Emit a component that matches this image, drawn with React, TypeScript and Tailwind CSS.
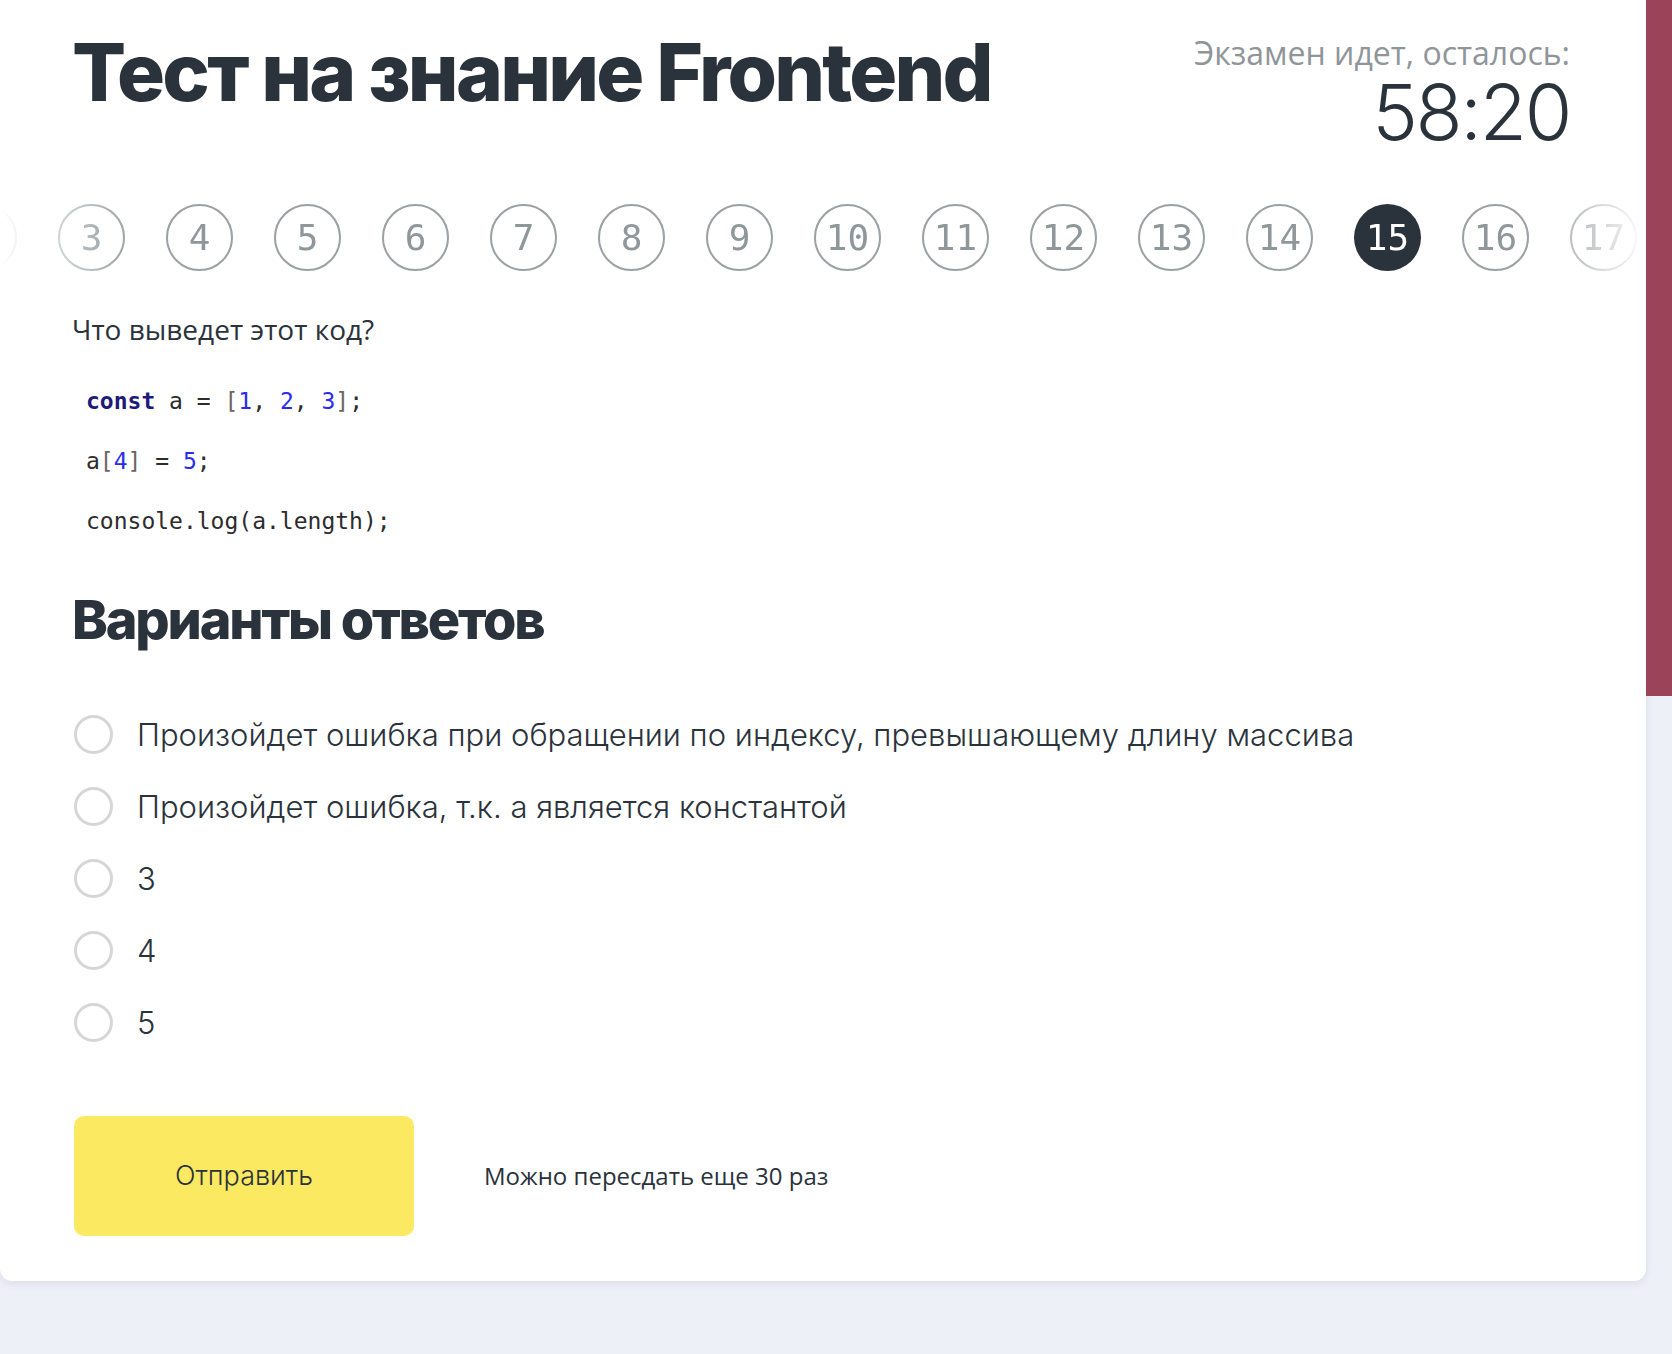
import { useState } from 'react';

const pages = Array.from({ length: 20 }, (_, i) => i + 1);

const options = [
  'Произойдет ошибка при обращении по индексу, превышающему длину массива',
  'Произойдет ошибка, т.к. a является константой',
  '3',
  '4',
  '5',
];

const sans = "font-['Inter',sans-serif]";
const body = "font-['Open_Sans',sans-serif]";
const mono = "font-['DejaVu_Sans_Mono',monospace]";

export default function App() {
  const [current, setCurrent] = useState(15);
  const [selected, setSelected] = useState<number | null>(null);

  return (
    <div className="min-h-screen w-full bg-[#edf0f7] flex items-start">
      <div className="w-[1646px] bg-white rounded-b-xl shadow-[0_3px_8px_rgba(20,30,60,0.08)] pt-[32px] pb-[45px] text-[#2a323b]">
        {/* header */}
        <div className="flex items-start justify-between pl-[72px] pr-[76px]">
          <h1 className={`${sans} font-extrabold text-[80px] leading-none tracking-[-0.035em]`}>
            Тест на знание Frontend
          </h1>
          <div className="flex flex-col items-end mt-[5px]">
            <span className={`${body} text-[32px] leading-none text-[#8f9599]`}>Экзамен идет, осталось:</span>
            <span className={`${sans} font-light text-[77px] leading-none tracking-[-0.03em] mt-[5px]`}>58:20</span>
          </div>
        </div>

        {/* question pager */}
        <div className="mt-[53px] overflow-hidden [mask-image:linear-gradient(to_right,transparent_0px,black_130px,black_calc(100%-110px),transparent_100%)]">
          <div className="flex gap-[41px] ml-[-158px]">
            {pages.map((n) => (
              <button
                key={n}
                onClick={() => setCurrent(n)}
                className={`${mono} shrink-0 w-[67px] h-[67px] rounded-full flex items-center justify-center text-[36px] leading-none ${
                  n === current
                    ? 'bg-[#2a323b] text-white'
                    : 'border-2 border-[#9aa0a4] text-[#8f979b]'
                }`}
              >
                {n}
              </button>
            ))}
          </div>
        </div>

        {/* question */}
        <div className="pl-[72px] pr-[76px]">
          <p className={`${body} text-[28px] leading-[36px] mt-[40px]`}>Что выведет этот код?</p>

          <div className={`${mono} text-[23px] leading-[60px] text-[#2c2c2c] ml-[14px] mt-[24px]`}>
            <div>
              <span className="font-bold text-[#1d1a7a]">const</span> a = <span className="text-[#6b6560]">[</span>
              <span className="text-[#2b2bf0]">1</span>, <span className="text-[#2b2bf0]">2</span>,{' '}
              <span className="text-[#2b2bf0]">3</span>
              <span className="text-[#6b6560]">]</span>;
            </div>
            <div>
              a<span className="text-[#6b6560]">[</span>
              <span className="text-[#2b2bf0]">4</span>
              <span className="text-[#6b6560]">]</span> = <span className="text-[#2b2bf0]">5</span>;
            </div>
            <div>console.log(a.length);</div>
          </div>

          <h2 className={`${sans} font-extrabold text-[54px] leading-none tracking-[-0.04em] mt-[42px]`}>
            Варианты ответов
          </h2>

          <div className="mt-[51px] ml-[2px] flex flex-col">
            {options.map((opt, i) => (
              <label key={i} className="h-[72px] flex items-center gap-[24px] cursor-pointer" onClick={() => setSelected(i)}>
                <span
                  className={`w-[39px] h-[39px] rounded-full border-[3px] shrink-0 flex items-center justify-center ${
                    selected === i ? 'border-[#2a323b]' : 'border-[#d6d6d6]'
                  }`}
                >
                  {selected === i && <span className="w-[17px] h-[17px] rounded-full bg-[#2a323b]" />}
                </span>
                <span className={`${sans} font-light text-[31px] leading-none`}>{opt}</span>
              </label>
            ))}
          </div>

          <div className="mt-[58px] ml-[2px] flex items-center gap-[70px]">
            <button className={`${sans} font-light w-[340px] h-[120px] rounded-[10px] bg-[#fce962] text-[27px] text-[#2a323b]`}>
              Отправить
            </button>
            <span className={`${body} text-[24px]`}>Можно пересдать еще 30 раз</span>
          </div>
        </div>
      </div>
      <div className="w-[26px] h-[696px] bg-[#9b4459] shrink-0" />
    </div>
  );
}
